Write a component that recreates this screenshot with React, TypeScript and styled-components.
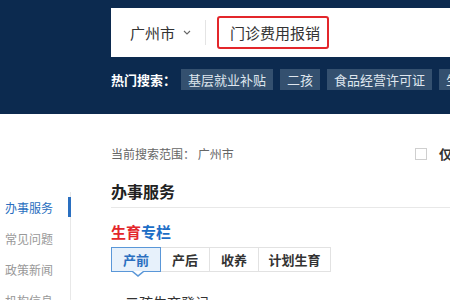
import React from "react";
import styled, { createGlobalStyle } from "styled-components";

const Global = createGlobalStyle`
  html, body { margin: 0; padding: 0; background: #fff; overflow: hidden; }
  body { font-family: "Noto Sans CJK SC", "Noto Sans", "Liberation Sans", sans-serif; }
`;

const Header = styled.header`
  height: 114px;
  background: #0c2a4f;
  padding-left: 111px;
  padding-top: 8px;
  box-sizing: border-box;
`;

const SearchBar = styled.div`
  height: 49px;
  background: #fff;
  display: flex;
  align-items: center;
  width: 400px;
`;

const City = styled.div`
  display: flex;
  align-items: center;
  gap: 8px;
  padding-left: 19px;
  padding-right: 14px;
  font-size: 15px;
  color: #333;
  border-right: 1px solid #e4e4e4;
  height: 25px;
`;

const SearchInput = styled.div`
  margin-left: 11px;
  height: 33px;
  width: 112px;
  box-sizing: border-box;
  border: 2px solid #e3262b;
  border-radius: 3px;
  display: flex;
  align-items: center;
  padding-left: 11px;
  font-size: 15px;
  color: #333;
  white-space: nowrap;
`;

const HotRow = styled.div`
  margin-top: 12px;
  display: flex;
  align-items: center;
  gap: 7px;
  white-space: nowrap;
`;

const HotLabel = styled.span`
  color: #fff;
  font-weight: 700;
  font-size: 13px;
  margin-right: -2px;
`;

const Tag = styled.span`
  background: #34506f;
  color: #dfe6ee;
  font-size: 13px;
  height: 21px;
  line-height: 21px;
  padding: 0 7px;
`;

const Main = styled.div`
  display: grid;
  grid-template-columns: 71px 1fr;
`;

const Nav = styled.nav`
  margin-top: 78px;
  border-right: 1px solid #e8e8e8;
  min-height: 120px;
  display: flex;
  flex-direction: column;
`;

const NavItem = styled.div<{ $active?: boolean }>`
  position: relative;
  height: 31px;
  line-height: 31px;
  padding-left: 5px;
  font-size: 12px;
  color: ${(p) => (p.$active ? "#2a6fc0" : "#999")};
  white-space: nowrap;
  &::after {
    content: "";
    display: ${(p) => (p.$active ? "block" : "none")};
    position: absolute;
    right: -1px;
    top: 5px;
    width: 3px;
    height: 20px;
    background: #2a6fc0;
  }
`;

const Content = styled.div`
  padding-left: 40px;
  padding-top: 30px;
`;

const InfoRow = styled.div`
  display: grid;
  grid-template-columns: 304px auto;
  align-items: center;
  height: 16px;
`;

const Scope = styled.span`
  font-size: 12px;
  color: #666;
  white-space: nowrap;
`;

const OnlyBox = styled.label`
  display: flex;
  align-items: center;
  gap: 12px;
  font-size: 13px;
  font-weight: 700;
  color: #333;
  white-space: nowrap;
`;

const Check = styled.span`
  width: 12px;
  height: 12px;
  border: 1px solid #cfcfcf;
  box-sizing: border-box;
  background: #fff;
`;

const Heading = styled.h2`
  margin: 19px 0 0;
  font-size: 16px;
  font-weight: 700;
  color: #222;
  height: 28px;
  line-height: 24px;
  box-sizing: content-box;
  border-bottom: 1px solid #e8e8e8;
  width: 600px;
`;

const ColumnTitle = styled.h3`
  margin: 14px 0 0;
  font-size: 15px;
  font-weight: 700;
  line-height: 20px;
  color: #1c6ec6;
  span { color: #e3262b; }
`;

const Tabs = styled.div`
  margin-top: 5px;
  display: flex;
`;

const Tab = styled.div<{ $active?: boolean; $w: number }>`
  position: relative;
  width: ${(p) => p.$w}px;
  height: 25px;
  box-sizing: border-box;
  display: flex;
  align-items: center;
  justify-content: center;
  font-size: 13px;
  font-weight: 700;
  color: ${(p) => (p.$active ? "#2a6fc0" : "#333")};
  background: ${(p) => (p.$active ? "#e7f1fb" : "#fff")};
  border: 1px solid ${(p) => (p.$active ? "#5a97d8" : "#e2e2e2")};
  margin-left: ${(p) => (p.$active ? "0" : "-1px")};
  z-index: ${(p) => (p.$active ? 1 : 0)};
  &::before, &::after {
    content: "";
    display: ${(p) => (p.$active ? "block" : "none")};
    position: absolute;
    left: 50%;
    width: 0;
    height: 0;
    border-style: solid;
    border-color: transparent;
  }
  &::before {
    bottom: -6px;
    margin-left: -4px;
    border-width: 5px 6px 0 6px;
    border-top-color: #5a97d8;
  }
  &::after {
    bottom: -4px;
    margin-left: -3px;
    border-width: 4px 5px 0 5px;
    border-top-color: #fff;
  }
`;

const List = styled.ul`
  list-style: none;
  margin: 20px 0 0;
  padding: 0;
`;

const ListItem = styled.li`
  display: flex;
  align-items: center;
  gap: 9px;
  font-size: 14px;
  color: #333;
  height: 20px;
  &::before {
    content: "";
    width: 3px;
    height: 3px;
    border-radius: 50%;
    background: #666;
    margin-left: 2px;
  }
`;

const Chevron = () => (
  <svg width="8" height="5" viewBox="0 0 8 5" fill="none">
    <path d="M1 1l3 3 3-3" stroke="#666" strokeWidth="1.1" />
  </svg>
);

export default function App() {
  return (
    <>
      <Global />
      <Header>
        <SearchBar>
          <City>
            广州市 <Chevron />
          </City>
          <SearchInput>门诊费用报销</SearchInput>
        </SearchBar>
        <HotRow>
          <HotLabel>热门搜索：</HotLabel>
          <Tag>基层就业补贴</Tag>
          <Tag>二孩</Tag>
          <Tag>食品经营许可证</Tag>
          <Tag>生育登记</Tag>
        </HotRow>
      </Header>
      <Main>
        <Nav>
          <NavItem $active>办事服务</NavItem>
          <NavItem>常见问题</NavItem>
          <NavItem>政策新闻</NavItem>
          <NavItem>机构信息</NavItem>
        </Nav>
        <Content>
          <InfoRow>
            <Scope>当前搜索范围： 广州市</Scope>
            <OnlyBox>
              <Check />
              仅显示本级
            </OnlyBox>
          </InfoRow>
          <Heading>办事服务</Heading>
          <ColumnTitle>
            <span>生育</span>专栏
          </ColumnTitle>
          <Tabs>
            <Tab $active $w={50}>产前</Tab>
            <Tab $w={50}>产后</Tab>
            <Tab $w={50}>收养</Tab>
            <Tab $w={73}>计划生育</Tab>
          </Tabs>
          <List>
            <ListItem>二孩生育登记</ListItem>
          </List>
        </Content>
      </Main>
    </>
  );
}
